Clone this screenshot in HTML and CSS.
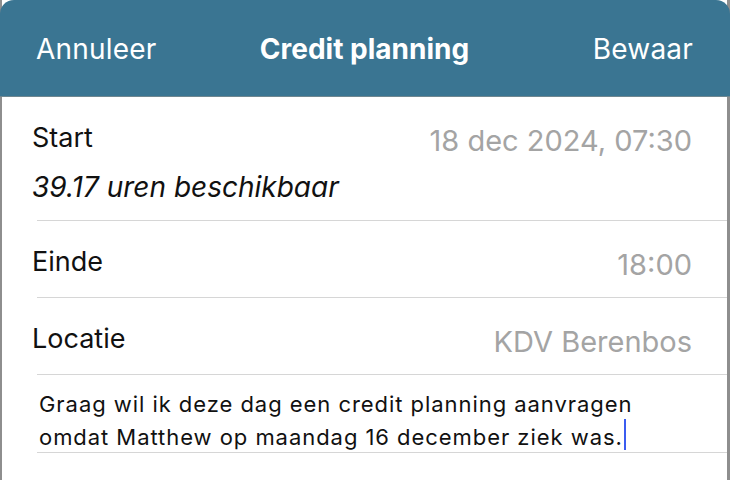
FILE: index.html
```html
<!DOCTYPE html>
<html lang="nl">
<head>
    <meta charset="UTF-8">
    <meta name="viewport" content="width=device-width, initial-scale=1.0">
    <title>Credit planning</title>
    <link rel="stylesheet" href="styles.css">
</head>
<body>
    <div class="sheet">
        <div class="header">
            <span class="header-btn">Annuleer</span>
            <h1>Credit planning</h1>
            <span class="header-btn right">Bewaar</span>
        </div>

        <div class="row first">
            <div class="row-line">
                <span class="label">Start</span>
                <span class="value">18 dec 2024, 07:30</span>
            </div>
            <div class="available">39.17 uren beschikbaar</div>
        </div>

        <div class="row">
            <div class="row-line">
                <span class="label">Einde</span>
                <span class="value">18:00</span>
            </div>
        </div>

        <div class="row">
            <div class="row-line">
                <span class="label">Locatie</span>
                <span class="value">KDV Berenbos</span>
            </div>
        </div>

        <div class="note">
            Graag wil ik deze dag een credit planning aanvragen<br>
            omdat Matthew op maandag 16 december ziek was.<span class="caret"></span>
        </div>
    </div>
</body>
</html>
```

FILE: styles.css
```css
html, body {
    margin: 0;
    padding: 0;
    background: #ffffff;
}

body {
    font-family: Inter, "Noto Sans", sans-serif;
    color: #111;
}

.sheet {
    min-height: 100vh;
    box-sizing: border-box;
    border-left: 2px solid #8e8e8e;
    border-right: 3px solid #8e8e8e;
    background: #fff;
}

.header {
    display: grid;
    grid-template-columns: 1fr auto 1fr;
    align-items: center;
    height: 97px;
    padding: 2px 37px 0 36px;
    box-sizing: border-box;
    background: #3a7592;
    border-radius: 14px 14px 0 0;
    border-bottom: 1px solid #6f8790;
    color: #fff;
    margin-left: -2px;
    margin-right: -3px;
}

.header h1 {
    margin: 0;
    font-size: 28px;
    line-height: 34px;
    font-weight: 700;
}

.header-btn {
    font-size: 28px;
    line-height: 34px;
    letter-spacing: 0.2px;
}

.header-btn.right {
    text-align: right;
}

/* rows: the separator starts a bit right of the labels */
.row {
    padding: 24px 35px 21px 30px;
    background: linear-gradient(#d6d6d6, #d6d6d6) no-repeat left 35px bottom / calc(100% - 35px) 1px;
}

.row.first {
    padding-bottom: 18px;
}

.row-line {
    display: flex;
    justify-content: space-between;
    align-items: baseline;
    height: 32px;
    line-height: 32px;
}

.label {
    font-size: 27px;
}

.value {
    font-size: 29px;
    color: #a4a4a4;
    position: relative;
    top: 4px;
}

.available {
    font-size: 28px;
    line-height: 32px;
    font-style: italic;
    margin-top: 18px;
}

.note {
    padding: 14px 35px 1px 37px;
    font-size: 22px;
    line-height: 30px;
    letter-spacing: 0.95px;
    background: linear-gradient(#d6d6d6, #d6d6d6) no-repeat left 35px bottom / calc(100% - 35px) 1px;
}

.caret {
    display: inline-block;
    width: 2px;
    height: 31px;
    background: #3b5cf0;
    vertical-align: -5px;
    margin-left: 1px;
}
```
